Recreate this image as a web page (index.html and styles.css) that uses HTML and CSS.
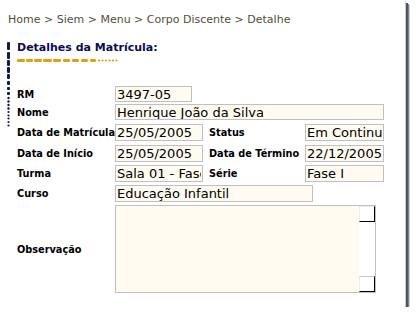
FILE: index.html
```html
<!DOCTYPE html>
<html lang="pt">
<head>
<meta charset="utf-8">
<title>Detalhes da Matrícula</title>
<link rel="stylesheet" href="styles.css">
</head>
<body>
<div class="panel">
  <div class="crumbs">Home &gt; Siem &gt; Menu &gt; Corpo Discente &gt; Detalhe</div>
  <div class="section">
    <svg class="rail" width="3" height="86" viewBox="0 0 3 86">
      <g fill="#14184a">
        <rect x="0" y="1" width="3" height="8" rx="1"/>
        <rect x="0" y="11" width="3" height="7" rx="1"/>
        <rect x="0" y="19" width="3" height="6" rx="1"/>
        <rect x="0" y="26" width="3" height="6" rx="1"/>
        <rect x="0" y="33" width="3" height="5" rx="1"/>
        <rect x="0" y="40" width="3" height="4" rx="1"/>
        <rect x="0" y="46" width="3" height="3" rx="1"/>
        <rect x="0" y="51" width="3" height="3" rx="1"/>
        <circle cx="1.5" cy="57" r="1.2"/>
        <circle cx="1.5" cy="60.5" r="1.2"/>
        <circle cx="1.5" cy="64" r="1.2"/>
        <circle cx="1.5" cy="67.5" r="1.2"/>
        <circle cx="1.5" cy="71" r="1.1"/>
        <circle cx="1.5" cy="74.5" r="1.1"/>
        <circle cx="1.5" cy="77.5" r="1.1"/>
        <circle cx="1.5" cy="81" r="1.1"/>
        <circle cx="1.5" cy="84.5" r="1.1"/>
      </g>
    </svg>
    <div class="content">
      <h1 class="title">Detalhes da Matrícula:</h1>
      <svg class="underline" width="102" height="3" viewBox="0 0 102 3">
        <g fill="#dca214">
          <rect x="0" y="0" width="8" height="3" rx="1.2"/>
          <rect x="9" y="0" width="7" height="3" rx="1.2"/>
          <rect x="17" y="0" width="8" height="3" rx="1.2"/>
          <rect x="26" y="0" width="9" height="3" rx="1.2"/>
          <rect x="36" y="0" width="8" height="3" rx="1.2"/>
          <rect x="46" y="0" width="7" height="3" rx="1.2"/>
          <rect x="55" y="0" width="7" height="3" rx="1.2"/>
          <rect x="64" y="0" width="7" height="3" rx="1.2"/>
          <rect x="73" y="0" width="6" height="3" rx="1.2"/>
          <circle cx="82" cy="1.5" r="1.1"/>
          <circle cx="85.5" cy="1.5" r="1.1"/>
          <circle cx="89" cy="1.5" r="1.1"/>
          <circle cx="92.5" cy="1.5" r="1.1"/>
          <circle cx="96" cy="1.5" r="1.1"/>
          <circle cx="99.5" cy="1.5" r="1.1"/>
        </g>
      </svg>
      <div class="form">
        <label class="lbl r1">RM</label>
        <input class="field w1 r1" type="text" value="3497-05">

        <label class="lbl r2">Nome</label>
        <input class="field wide r2" type="text" value="Henrique João da Silva">

        <label class="lbl r3">Data de Matrícula</label>
        <input class="field r3" type="text" value="25/05/2005">
        <label class="lbl lbl-right r3">Status</label>
        <input class="field r3" type="text" value="Em Continuidade">

        <label class="lbl r4">Data de Início</label>
        <input class="field r4" type="text" value="25/05/2005">
        <label class="lbl lbl-right r4">Data de Término</label>
        <input class="field r4" type="text" value="22/12/2005">

        <label class="lbl r5">Turma</label>
        <input class="field r5" type="text" value="Sala 01 - Fase I">
        <label class="lbl lbl-right r5">Série</label>
        <input class="field r5" type="text" value="Fase I">

        <label class="lbl r6">Curso</label>
        <input class="field curso r6" type="text" value="Educação Infantil">

        <label class="lbl r7">Observação</label>
        <div class="obs r7">
          <textarea class="obs-text"></textarea>
          <div class="scroll">
            <span class="sbtn"></span>
            <span class="sbtn sbtn-end"></span>
          </div>
        </div>
      </div>
    </div>
  </div>
</div>
</body>
</html>
```

FILE: styles.css
```css
html, body {
  margin: 0;
  padding: 0;
  background: #ffffff;
}

body {
  font-family: "DejaVu Sans", Verdana, sans-serif;
}

.panel {
  width: 405px;
  height: 307px;
  background: #ffffff;
  box-shadow: 1px 1px 0 #c4ccc0, 3px 3px 0 #52526a, 4px 4px 0 #80808e, 5px 5px 0 #c8d4c4;
  overflow: hidden;
}

.crumbs {
  padding: 13px 0 0 8px;
  font-size: 11px;
  line-height: 13px;
  color: #50503a;
  white-space: nowrap;
}

.section {
  display: flex;
  align-items: flex-start;
  margin-top: 15px;
  padding-left: 7px;
}

.rail {
  display: block;
  flex: none;
  margin-right: 7px;
}

.content {
  display: flex;
  flex-direction: column;
}

.title {
  margin: 0;
  font-size: 11px;
  line-height: 13px;
  font-weight: bold;
  color: #0c0c52;
  white-space: nowrap;
}

.underline {
  display: block;
  margin-top: 5px;
}

.form {
  display: grid;
  grid-template-columns: 98px 88px 102px 79px;
  grid-template-rows: 18px 20px 21px 20px 20px 20px 88px;
  align-items: start;
  margin-top: 24px;
}

.lbl {
  font-size: 9.75px;
  font-weight: bold;
  color: #000000;
  white-space: nowrap;
  height: 17px;
  line-height: 17px;
  overflow: visible;
}

.lbl-right {
  padding-left: 6px;
}

.field {
  box-sizing: border-box;
  width: 100%;
  height: 17px;
  margin: 0;
  padding: 0 1px;
  border: 1px solid #c0c0c0;
  background: #fffbf0;
  font-family: "DejaVu Sans", Verdana, sans-serif;
  font-size: 13px;
  color: #000000;
  outline: none;
}

.r1 { grid-row: 1; }
.r2 { grid-row: 2; }
.r3 { grid-row: 3; }
.r4 { grid-row: 4; }
.r5 { grid-row: 5; }
.r6 { grid-row: 6; }
.r7 { grid-row: 7; }

.r1.field { height: 16px; width: 77px; }
.r2.field { height: 16px; }

.wide { grid-column: 2 / 5; }
.curso { grid-column: 2 / 5; width: 198px; }

.lbl.r7 {
  align-self: center;
}

.obs {
  grid-column: 2 / 5;
  box-sizing: border-box;
  width: 261px;
  height: 88px;
  display: flex;
  border: 1px solid #c0c0c0;
  background: #fffbf0;
}

.obs-text {
  flex: 1;
  margin: 0;
  padding: 0;
  border: none;
  background: transparent;
  resize: none;
  outline: none;
  overflow: hidden;
  font-family: "DejaVu Sans", Verdana, sans-serif;
  font-size: 13px;
}

.scroll {
  width: 16px;
  flex: none;
  display: flex;
  flex-direction: column;
  justify-content: space-between;
  background: #ffffff;
}

.sbtn {
  display: block;
  box-sizing: border-box;
  height: 16px;
  border-top: 1px solid #ececec;
  border-left: 1px solid #ececec;
  border-right: 1px solid #000000;
  border-bottom: 1px solid #000000;
  background: #ffffff;
}

.sbtn-end {
  border-top-color: #c8c8c8;
}
```
